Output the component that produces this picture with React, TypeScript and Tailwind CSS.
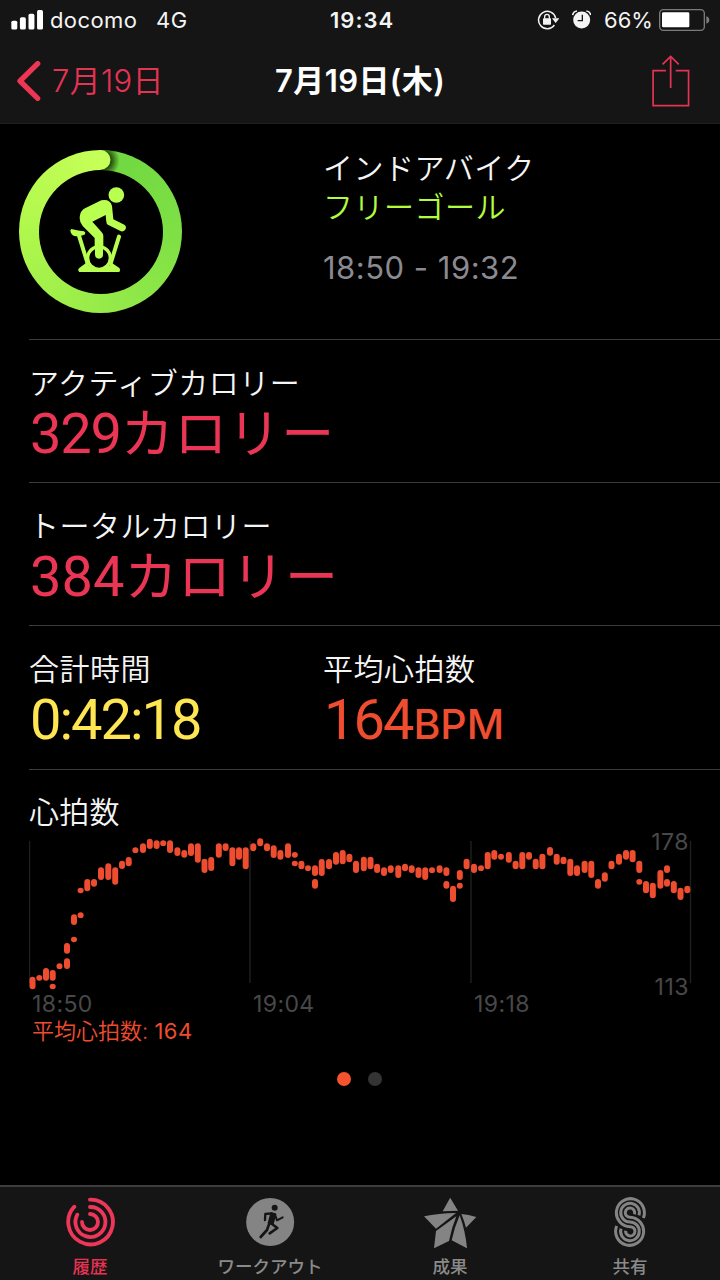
import type { ReactNode } from 'react'

// [x, top, bottom] of every heart rate range on the plot
const heartRate = [
  [32.5, 976.7, 989.3], [39.3, 975, 980.7], [46, 968, 980.7], [52.7, 970, 980.7],
  [52.7, 983.7, 989.3], [59.5, 963.3, 969], [67, 943, 953.7], [67, 958.3, 969],
  [74, 914.3, 925], [74, 936.7, 942.3], [80.6, 887.7, 893.3], [80.6, 912.3, 918],
  [87.3, 879, 891.3], [94, 879, 886.7], [101, 867.3, 880], [108.3, 863.3, 880],
  [115.2, 867.3, 884.7], [122, 860.7, 869], [128.7, 857, 866.3], [135.4, 847.3, 853],
  [143, 843.3, 853], [149.8, 838.7, 849], [156.6, 840.3, 849], [163.2, 840.3, 846],
  [170, 840.3, 853], [177.4, 847.3, 856], [184.3, 850, 857.7], [191, 843.3, 856],
  [197.8, 843.3, 862.7], [204.5, 858.7, 873], [211.2, 857, 871], [218.8, 843.3, 857.7],
  [225.6, 843.3, 851], [232.4, 847.3, 866.3], [239, 847.3, 859.7], [245.7, 847.3, 869.3],
  [253.3, 843.3, 851.3], [260.2, 838.3, 846.3], [267, 843.3, 851.3], [273.7, 845.3, 858],
  [280.4, 850, 859.7], [288, 843.3, 858], [294.8, 852, 857.7], [294.8, 860.7, 866.3],
  [301.4, 860.7, 869.3], [308, 865.3, 871], [315, 865.3, 876], [315, 879, 888.7],
  [321.7, 859, 876], [329, 859, 869.3], [336, 852, 864.7], [342.7, 850, 864.3],
  [349.4, 853.7, 862.3], [356, 860.7, 873], [363.8, 856.7, 871.3], [370.5, 856.7, 869.3],
  [377.1, 863.7, 873], [384, 867.3, 876], [390.7, 865.3, 873], [398.3, 865.3, 878],
  [405, 863.7, 871.3], [411.7, 865.3, 873], [418.5, 867.3, 878], [425.2, 867.3, 880],
  [432, 867.3, 873], [439.6, 865.3, 873], [446.4, 867.3, 876], [446.4, 881, 888.7],
  [453, 885.7, 902], [459.8, 870, 880], [459.8, 882.7, 888.7], [466.6, 858.7, 869.3],
  [474, 863.7, 873], [481, 865.3, 871], [487.7, 852, 869.3], [494.3, 850, 859.7],
  [501, 853.7, 859.7], [508.8, 852, 862.7], [515.6, 860.7, 869.3], [522.3, 852, 869.3],
  [529, 852, 859.7], [535.7, 858.7, 869.3], [542.4, 853.7, 869.3], [550, 847, 855.7],
  [556.7, 853.7, 864.7], [563.5, 856.7, 864.3], [570.3, 858.7, 876], [577, 865.3, 876],
  [584.6, 860.7, 873], [591.3, 860.7, 878], [598, 879, 888.7], [604.8, 872.3, 881.7],
  [611.5, 860.7, 869.3], [619, 853.7, 864.7], [626, 850, 859.7], [632.6, 850, 862.3],
  [639.3, 860.7, 873], [639.3, 879, 884.7], [646, 881, 893.3], [652.8, 882.7, 898.3],
  [660.4, 870, 888.7], [667, 865.3, 873], [667, 879, 886.7], [673.8, 881, 893.3],
  [680.5, 887.7, 900], [687.3, 885.7, 893.3],
]

function StatusBar() {
  return (
    <div className="flex h-10 items-center text-[22px] leading-10 text-[#f4f4f4]">
      <svg className="ml-[11px] h-5 w-8" viewBox="33 28 97 60" fill="#fff">
        <rect x="34" y="60" width="18" height="27" rx="5" />
        <rect x="60" y="50" width="18" height="37" rx="5" />
        <rect x="86" y="39" width="18" height="48" rx="5" />
        <rect x="112" y="28" width="18" height="59" rx="5" />
      </svg>
      <span className="ml-[7px] w-[106px] tracking-[0.4px]">docomo</span>
      <span className="w-[174px] tracking-[0.5px]">4G</span>
      <span className="w-[207px] font-semibold tracking-[1px]">19:34</span>
      <svg className="h-5 w-[22px]" viewBox="534 28 66 60" fill="none">
        <path d="M586 73A26 26 0 1 1 590 52" stroke="#f4f4f4" strokeWidth="4.5" />
        <path d="M579 53h22l-11 14z" fill="#f4f4f4" />
        <rect x="552" y="53" width="24" height="19" rx="2" fill="#f4f4f4" />
        <path d="M557 54v-6a7 7 0 0 1 14 0v6" stroke="#f4f4f4" strokeWidth="4" />
      </svg>
      <svg className="ml-[13px] h-5 w-[19px]" viewBox="638 28 57 60">
        <circle cx="667" cy="58" r="25.500" fill="#f4f4f4" />
        <path d="M640 43q2-11 13-12M694 43q-2-11-13-12" fill="none" stroke="#f4f4f4" strokeWidth="5" />
        <path d="M669 42v18h-14" fill="none" stroke="#151515" strokeWidth="4" />
      </svg>
      <span className="ml-[13px] w-[55px]">66%</span>
      <svg className="h-[22px] w-[51px]" viewBox="897 26 153 66">
        <rect x="899" y="28" width="134" height="62" rx="11" fill="none" stroke="#7b7b7b" strokeWidth="4" />
        <rect x="906" y="36" width="82" height="45" rx="4" fill="#fff" />
        <path d="M1039 48q9 3 9 11t-9 11z" fill="#7b7b7b" />
      </svg>
    </div>
  )
}

function NavBar() {
  return (
    <div className="flex h-[83px] items-center">
      <svg className="-mt-0.5 ml-[17px] h-10 w-6" viewBox="51 182 72 120" fill="none" stroke="#ed3554" strokeWidth="16" strokeLinecap="round" strokeLinejoin="round">
        <path d="M113 190 60 242l53 52" />
      </svg>
      <span className="-mt-0.5 ml-[11px] w-[223px] text-[31px] leading-10 font-[350] tracking-[0.3px] text-[#e53354]">7月19日</span>
      <h1 className="-mt-0.5 w-[377px] text-[31px] leading-10 font-semibold tracking-[0.4px] text-white">7月19日(木)</h1>
      <svg className="-mt-0.5 h-[52px] w-[38px]" viewBox="878 164 112 154" fill="none" stroke="#e53354" strokeWidth="5">
        <path d="M919 210h-38v104h105V210h-38M933 262v-93M909 192l24-24 24 24" />
      </svg>
    </div>
  )
}

function WorkoutRing() {
  return (
    <div className="grid size-[163px] place-items-center">
      <div className="col-start-1 row-start-1 grid size-[163px] place-items-center rounded-full bg-[conic-gradient(#6fd741,#7ee045_25%,#97eb49_50%,#b0f74c_75%,#c6ff57)]">
        <div className="size-[124px] rounded-full bg-black" />
      </div>
      <svg className="z-10 col-start-1 row-start-1 size-[163px]" viewBox="57 59 489 489" fill="#b9ff50">
        <defs>
          <radialGradient id="shade">
            <stop offset="0.5" stopColor="#143000" stopOpacity="0.85" />
            <stop offset="1" stopColor="#143000" stopOpacity="0" />
          </radialGradient>
          <clipPath id="track">
            <path d="M302 60h70v80q-34-21-70-21z" />
          </clipPath>
        </defs>
        <circle cx="305" cy="91" r="54" fill="url(#shade)" clipPath="url(#track)" />
        <path d="M299 59h3a29.500 29.500 0 0 1 0 59h-3z" fill="#c5ff57" />
        <circle cx="349" cy="194" r="23.500" />
        <path
          d="M304 210q26-5 32 17l4 40 33 16q7 5 4 13-4 9-14 7l-38-19q-6-3-6-10l-2-20-40 20 27 30q6 6 6 13v54q0 12-13 12t-13-12v-48l-36-36q-12-13-8-32 2-14 15-21z"
        />
        <path d="M214 296q22 6 38 7 6 3 3 9-4 4-25 6-13 1-18-12-3-8 2-10z" />
        <path d="M237 316l26 84M357 319l-25 80" fill="none" stroke="#b9ff50" strokeWidth="12" strokeLinecap="round" />
        <path d="M258 398q12 17 39 18 27-1 39-18l22 15q5 5 0 12H238q-7-6 0-12z" />
        <circle cx="297" cy="383" r="34" fill="#000" stroke="#b9ff50" strokeWidth="10" />
        <path d="M285 340h24v32q0 13-12 13t-12-13z" />
      </svg>
    </div>
  )
}

function Metric({ label, children, className }: { label: string; children: ReactNode; className: string }) {
  return (
    <div>
      <p className="text-[30px] leading-10 font-[350] tracking-[0.5px] text-[#f5f5f5]">{label}</p>
      <p className={`pt-px pl-px font-['Roboto','Noto_Sans_CJK_JP',sans-serif] text-[56px] leading-[60px] whitespace-nowrap ${className}`}>
        {children}
      </p>
    </div>
  )
}

function HeartRateChart() {
  return (
    <section className="ml-[29px] pt-[22px]">
      <h2 className="text-[30px] leading-10 font-[350] tracking-[0.3px] text-[#f5f5f5]">心拍数</h2>
      <div className="grid">
        <svg className="col-start-1 row-start-1 h-[160px] w-[663px]" viewBox="29 832 663 160">
          {[29.5, 250, 471, 690.500].map((x) => (
            <line key={x} x1={x} x2={x} y1="841" y2="983" stroke="#202020" strokeWidth="1.400" />
          ))}
          {heartRate.map(([x, top, bottom]) => (
            <rect key={`${x}-${top}`} x={x - 3} y={top} width="6" height={bottom - top} rx="3" fill="#ef4d30" />
          ))}
        </svg>
        <div className="col-start-1 row-start-1 flex h-[165px] w-[660px] flex-col items-end justify-between text-[23px] leading-5 tracking-[0.5px] text-[#484848]">
          <span>178</span>
          <span>113</span>
        </div>
      </div>
      <div className="grid h-[14px] grid-cols-[221px_221px_1fr] pl-[3px] text-[23px] leading-[15px] tracking-[0.4px] text-[#484848]">
        <span>18:50</span>
        <span>19:04</span>
        <span>19:18</span>
      </div>
      <p className="mt-[9px] pl-[3px] text-[22px] leading-[22px] font-[350] text-[#ee4c30]">
        平均心拍数: <span className="font-normal tracking-[0.5px]">164</span>
      </p>
    </section>
  )
}

function HistoryIcon() {
  return (
    <svg className="h-[50px] w-[52px]" viewBox="192 52 156 150" fill="none" stroke="#ee3659" strokeWidth="11.500" strokeLinecap="round">
      <path d="M270 60A67 67 0 1 1 223 81" />
      <path d="M270 82A45 45 0 1 1 232 105" />
      <path d="M270 103A24 24 0 1 1 246 127" />
    </svg>
  )
}

function WorkoutIcon() {
  return (
    <svg className="h-[50px] w-[52px]" viewBox="731 52 156 150" fill="none" stroke="#151515" strokeLinecap="round" strokeLinejoin="round">
      <circle cx="809.500" cy="127" r="72" fill="#848484" stroke="none" />
      <circle cx="823" cy="84" r="9" fill="#151515" stroke="none" />
      <path d="M794 121l1-18 19-2" strokeWidth="7" />
      <path d="M824 105l6 17 17-9" strokeWidth="6" />
      <path d="M813 101l12 3-8 29-12-3z" fill="#151515" strokeWidth="6" />
      <path d="M807 131l-7 20-19 21M811 130l20 15-23 16" strokeWidth="8" />
    </svg>
  )
}

function AwardsIcon() {
  return (
    <svg className="h-[52px] w-[54px]" viewBox="189 52 162 156" fill="#848484">
      <path d="M270.500 54 294 93q-22 0-46 2z" />
      <path d="M192 110q43-9 96-10l-60 47z" />
      <path d="M228 154l61-44q-14 34-22 74l-45 22z" />
      <path d="M299 107q17 46 22 99l-46-24q8-38 24-75z" />
      <path d="M304 103q21 1 45 9l-31 32q-6-22-14-41z" />
    </svg>
  )
}

function SharingIcon() {
  return (
    <svg className="h-[50px] w-[52px]" viewBox="731 51 156 150" fill="none" stroke="#848484" strokeWidth="9">
      <path d="M849 114A42 42 0 1 0 809 140A14 14 0 1 1 796 152" />
      <path d="M836 106A28 28 0 1 0 809 126A28 28 0 1 1 782 146" />
      <path d="M822 103A14 14 0 1 0 809 112A42 42 0 1 1 769 138" />
    </svg>
  )
}

const tabs = [
  { label: '履歴', icon: <HistoryIcon />, color: 'text-[#e53354]' },
  { label: 'ワークアウト', icon: <WorkoutIcon />, color: 'text-[#8a8a8a]' },
  { label: '成果', icon: <AwardsIcon />, color: 'text-[#8a8a8a]' },
  { label: '共有', icon: <SharingIcon />, color: 'text-[#8a8a8a]' },
]

export default function App() {
  return (
    <div className="flex h-[1280px] w-[720px] flex-col overflow-hidden bg-black font-['Inter','Noto_Sans_CJK_JP',sans-serif]">
      <header className="h-[124px] shrink-0 border-b border-[#1f1f1f] bg-[#151515]">
        <StatusBar />
        <NavBar />
      </header>

      <main className="flex-1">
        <section className="flex h-[215px] pl-[19px]">
          <div className="w-[304px] pt-[26px]">
            <WorkoutRing />
          </div>
          <div className="pt-[25px] text-[30px] leading-[39px] font-[350] tracking-[0.5px]">
            <p className="text-[#f5f5f5]">インドアバイク</p>
            <p className="text-[#b3fb3e]">フリーゴール</p>
            <p className="mt-[21px] text-[31px] font-normal text-[#8b8a90]">18:50 - 19:32</p>
          </div>
        </section>
        <section className="ml-[29px] h-[143px] border-t border-[#3b3b3b] pt-[23px]">
          <Metric label="アクティブカロリー" className="tracking-[-1.2px] text-[#ea3654]">
            329<span className="text-[53px] tracking-[0.5px]">カロリー</span>
          </Metric>
        </section>
        <section className="ml-[29px] h-[143px] border-t border-[#3b3b3b] pt-[23px]">
          <Metric label="トータルカロリー" className="tracking-normal text-[#ea3654]">
            384<span className="text-[53px] tracking-[0.5px]">カロリー</span>
          </Metric>
        </section>
        <section className="ml-[29px] grid h-[144px] grid-cols-[294px_1fr] border-t border-[#3b3b3b] pt-[23px]">
          <Metric label="合計時間" className="tracking-[-2px] text-[#fee552]">
            0:42:18
          </Metric>
          <Metric label="平均心拍数" className="tracking-[-2px] text-[#ef4d30]">
            164<span className="pl-px font-['Inter'] text-[41px] font-medium tracking-normal">BPM</span>
          </Metric>
        </section>
        <div className="ml-[29px] border-t border-[#3b3b3b]" />
        <HeartRateChart />
        <div className="mt-[30px] mr-0.5 flex justify-center gap-[17px]">
          <span className="size-3.5 rounded-full bg-[#f5522f]" />
          <span className="size-3.5 rounded-full bg-[#343434]" />
        </div>
      </main>

      <nav className="grid h-[95px] shrink-0 grid-cols-4 border-t-2 border-[#3d3d3d] bg-[#151515]">
        {tabs.map(({ label, icon, color }) => (
          <div key={label} className={`flex flex-col items-center pt-2.5 text-[17.500px] font-medium ${color}`}>
            <div className="h-[58px]">{icon}</div>
            <span className="leading-6">{label}</span>
          </div>
        ))}
      </nav>
    </div>
  )
}
